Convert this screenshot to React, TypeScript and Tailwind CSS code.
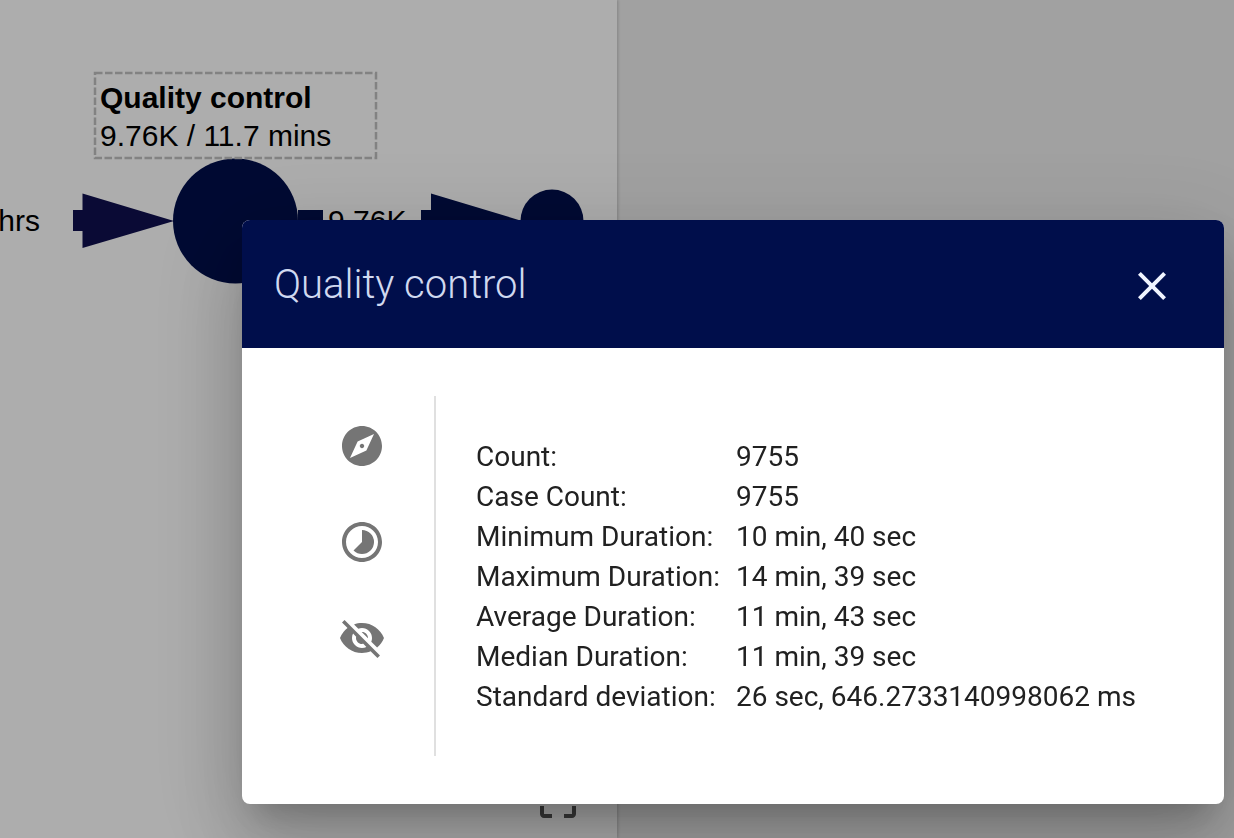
import {
  MdClose,
  MdCropFree,
  MdExplore,
  MdTimelapse,
  MdVisibilityOff,
} from "react-icons/md";

const stats = [
  { label: "Count:", value: "9755" },
  { label: "Case Count:", value: "9755" },
  { label: "Minimum Duration:", value: "10 min, 40 sec" },
  { label: "Maximum Duration:", value: "14 min, 39 sec" },
  { label: "Average Duration:", value: "11 min, 43 sec" },
  { label: "Median Duration:", value: "11 min, 39 sec" },
  { label: "Standard deviation:", value: "26 sec, 646.2733140998062 ms" },
];

const actions = [
  { label: "Explore", icon: MdExplore },
  { label: "Show duration", icon: MdTimelapse },
  { label: "Hide activity", icon: MdVisibilityOff },
];

function ProcessMap() {
  return (
    <section className="relative w-1/2 overflow-hidden bg-white text-[30px] leading-[38px] text-black shadow-[1px_0_3px_rgba(0,0,0,0.2)]">
      {/* Nodes and edges */}
      <svg className="absolute top-0 left-0" width="618" height="400" aria-hidden="true">
        <path d="M73 210H82.500V193.500L174 221L82.500 248V231H73Z" fill="#10104e" />
        <circle cx="235.500" cy="221" r="62.500" fill="#000e4b" />
        <path d="M298 210H323V231H298Z" fill="#000e4b" />
        <path d="M421 210H431V193.500L522 221L431 248V231H421Z" fill="#000e4b" />
        <circle cx="552" cy="221" r="31.500" fill="#000e4b" />
        <rect
          x="95"
          y="73"
          width="281"
          height="85"
          fill="none"
          stroke="#c0c0c0"
          strokeWidth="2.5"
          strokeDasharray="7.5 2.5"
        />
      </svg>

      {/* Labels */}
      <div className="absolute top-[79px] left-[100px] whitespace-nowrap">
        <div className="font-bold">Quality control</div>
        <div>9.76K / 11.7 mins</div>
      </div>
      <div className="absolute top-[202px] left-0 flex w-10 justify-end whitespace-nowrap">hrs</div>
      <div className="absolute top-[202px] left-[328px] whitespace-nowrap">9.76K</div>

      <button
        type="button"
        aria-label="Fit to screen"
        className="absolute bottom-[14px] left-[534px] text-[#555555]"
      >
        <MdCropFree className="size-12" />
      </button>
    </section>
  );
}

function DetailsDialog() {
  return (
    <div
      role="dialog"
      aria-labelledby="dialog-title"
      className="w-full overflow-hidden rounded-lg bg-white font-['Roboto',sans-serif] text-[#212121] shadow-[0_22px_30px_-14px_rgba(0,0,0,0.2),0_48px_76px_6px_rgba(0,0,0,0.14),0_18px_92px_16px_rgba(0,0,0,0.12)]"
    >
      <header className="flex h-32 items-center justify-between bg-[#000e4b] pr-12 pl-8">
        <h2 id="dialog-title" className="pt-[2px] text-[40px] leading-[64px] font-light text-[#d0d9f0]">
          Quality control
        </h2>
        <button type="button" aria-label="Close" className="pt-1 text-[#f0f4ff]">
          <MdClose className="size-12" />
        </button>
      </header>

      <div className="flex p-12">
        {/* Side actions */}
        <nav className="flex min-h-[360px] flex-col gap-4 border-r-2 border-[#e0e0e0] px-8 pt-[10px]">
          {actions.map(({ label, icon: Icon }) => (
            <button
              key={label}
              type="button"
              aria-label={label}
              className="flex size-20 items-center justify-center text-[#757575]"
            >
              <Icon className="size-12" />
            </button>
          ))}
        </nav>

        <div className="flex flex-1 items-center pt-[2px] pl-10">
          <table className="text-left text-[28px] leading-10 whitespace-nowrap">
            <tbody>
              {stats.map((row) => (
                <tr key={row.label}>
                  <th scope="row" className="w-[260px] p-0 font-normal">
                    {row.label}
                  </th>
                  <td className="p-0">{row.value}</td>
                </tr>
              ))}
            </tbody>
          </table>
        </div>
      </div>
    </div>
  );
}

export default function App() {
  return (
    <main className="flex min-h-screen bg-[#eeeeee] font-['Liberation_Sans',sans-serif]">
      <ProcessMap />

      {/* Backdrop */}
      <div className="fixed inset-0 flex items-start overflow-hidden bg-black/32 pt-[220px] pr-[10px] pl-[242px]">
        <DetailsDialog />
      </div>
    </main>
  );
}
